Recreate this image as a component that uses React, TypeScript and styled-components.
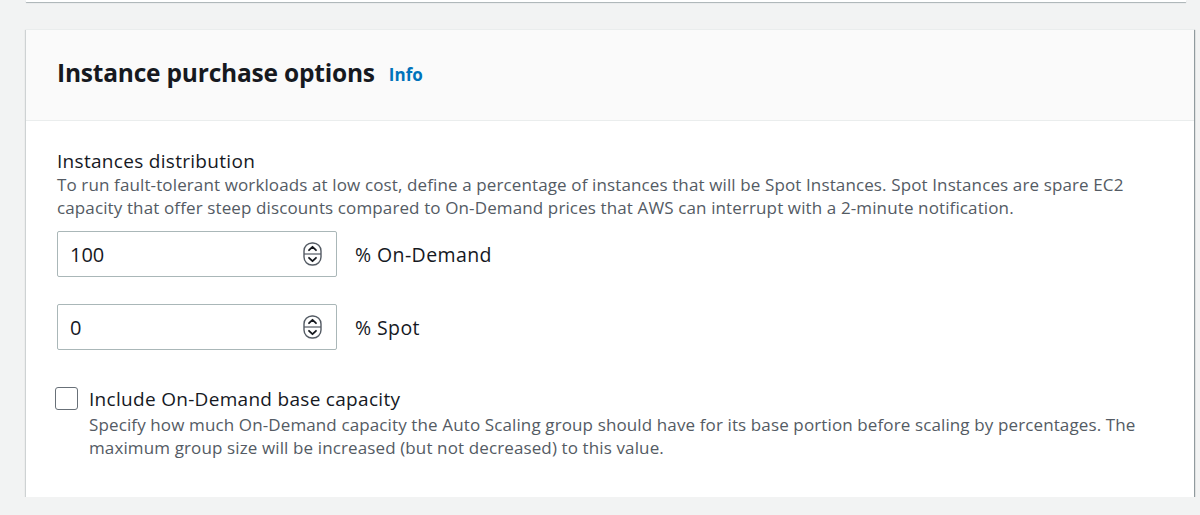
import styled, { createGlobalStyle } from "styled-components";

const GlobalStyle = createGlobalStyle`
  html, body {
    margin: 0;
    padding: 0;
    background: #f2f3f3;
    font-family: "Open Sans", "Noto Sans", Arial, sans-serif;
    color: #16191f;
  }
`;

const Page = styled.div`
  padding: 0 6px 0 26px;
`;

const PrevCardEdge = styled.div`
  height: 2px;
  margin-right: 8px;
  background: #ffffff;
  box-shadow: 0 1px 1px 0 rgba(0, 28, 36, 0.3);
`;

const Card = styled.section`
  margin-top: 27px;
  background: #ffffff;
  box-shadow: 1px 1px 1px 0 rgba(0, 28, 36, 0.3),
    1px 1px 1px 0 rgba(0, 28, 36, 0.15), -1px 1px 1px 0 rgba(0, 28, 36, 0.15);
  border-top: 1px solid #eaeded;
`;

const CardHeader = styled.header`
  height: 91px;
  box-sizing: border-box;
  display: flex;
  align-items: center;
  padding: 0 31px 5px;
  background: #fafafa;
  border-bottom: 1px solid #eaeded;
`;

const Title = styled.h2`
  margin: 0;
  font-size: 24.5px;
  font-weight: 700;
  letter-spacing: -0.2px;
  color: #16191f;
`;

const InfoLink = styled.a`
  margin-left: 14px;
  margin-top: 4px;
  font-size: 17px;
  font-weight: 700;
  color: #0073bb;
  text-decoration: none;
`;

const CardBody = styled.div`
  padding: 28px 31px 38px;
`;

const Label = styled.div`
  font-size: 19px;
  line-height: 24px;
  letter-spacing: 0.3px;
  color: #16191f;
`;

const Description = styled.p`
  margin: 0;
  font-size: 17px;
  line-height: 23px;
  letter-spacing: 0.12px;
  color: #545b64;
  white-space: nowrap;
`;

const Fields = styled.div`
  display: flex;
  flex-direction: column;
  gap: 27px;
  margin-top: 12px;
`;

const FieldRow = styled.div`
  display: flex;
  align-items: center;
  gap: 18px;
`;

const NumberBox = styled.div`
  width: 280px;
  height: 46px;
  box-sizing: border-box;
  border: 1px solid #aab7b8;
  border-radius: 2px;
  display: flex;
  align-items: center;
  justify-content: space-between;
  padding: 0 14px 0 12px;
  background: #ffffff;
`;

const NumberValue = styled.span`
  font-size: 20px;
  color: #16191f;
`;

const Unit = styled.span`
  font-size: 19.5px;
  letter-spacing: 0.4px;
  color: #16191f;
`;

const CheckRow = styled.div`
  display: flex;
  gap: 11px;
  margin-top: 37px;
  margin-left: -2px;
`;

const CheckBox = styled.span`
  flex: none;
  width: 21px;
  height: 21px;
  border: 1.5px solid #687078;
  border-radius: 3px;
  background: #ffffff;
`;

const CheckText = styled.div`
  display: flex;
  flex-direction: column;
  gap: 2px;
`;

const Spinner = () => (
  <svg width="19" height="24" viewBox="0 0 19 24" fill="none">
    <rect x="1" y="1" width="17" height="22" rx="8" stroke="#545b64" strokeWidth="1.4" />
    <line x1="1" y1="12" x2="18" y2="12" stroke="#545b64" strokeWidth="1.2" />
    <path d="M6 8.2 L9.5 4.8 L13 8.2" stroke="#16191f" strokeWidth="1.8" strokeLinecap="round" strokeLinejoin="round" />
    <path d="M6 15.8 L9.5 19.2 L13 15.8" stroke="#16191f" strokeWidth="1.8" strokeLinecap="round" strokeLinejoin="round" />
  </svg>
);

const NumberField = ({ value, unit }: { value: string; unit: string }) => (
  <FieldRow>
    <NumberBox>
      <NumberValue>{value}</NumberValue>
      <Spinner />
    </NumberBox>
    <Unit>{unit}</Unit>
  </FieldRow>
);

export default function App() {
  return (
    <Page>
      <GlobalStyle />
      <PrevCardEdge />
      <Card>
        <CardHeader>
          <Title>Instance purchase options</Title>
          <InfoLink href="#">Info</InfoLink>
        </CardHeader>
        <CardBody>
          <Label>Instances distribution</Label>
          <Description>
            To run fault-tolerant workloads at low cost, define a percentage of instances that will be
            Spot Instances. Spot Instances are spare EC2
            <br />
            capacity that offer steep discounts compared to On-Demand prices that AWS can interrupt
            with a 2-minute notification.
          </Description>
          <Fields>
            <NumberField value="100" unit="% On-Demand" />
            <NumberField value="0" unit="% Spot" />
          </Fields>
          <CheckRow>
            <CheckBox />
            <CheckText>
              <Label>Include On-Demand base capacity</Label>
              <Description>
                Specify how much On-Demand capacity the Auto Scaling group should have for its base
                portion before scaling by percentages. The
                <br />
                maximum group size will be increased (but not decreased) to this value.
              </Description>
            </CheckText>
          </CheckRow>
        </CardBody>
      </Card>
    </Page>
  );
}
